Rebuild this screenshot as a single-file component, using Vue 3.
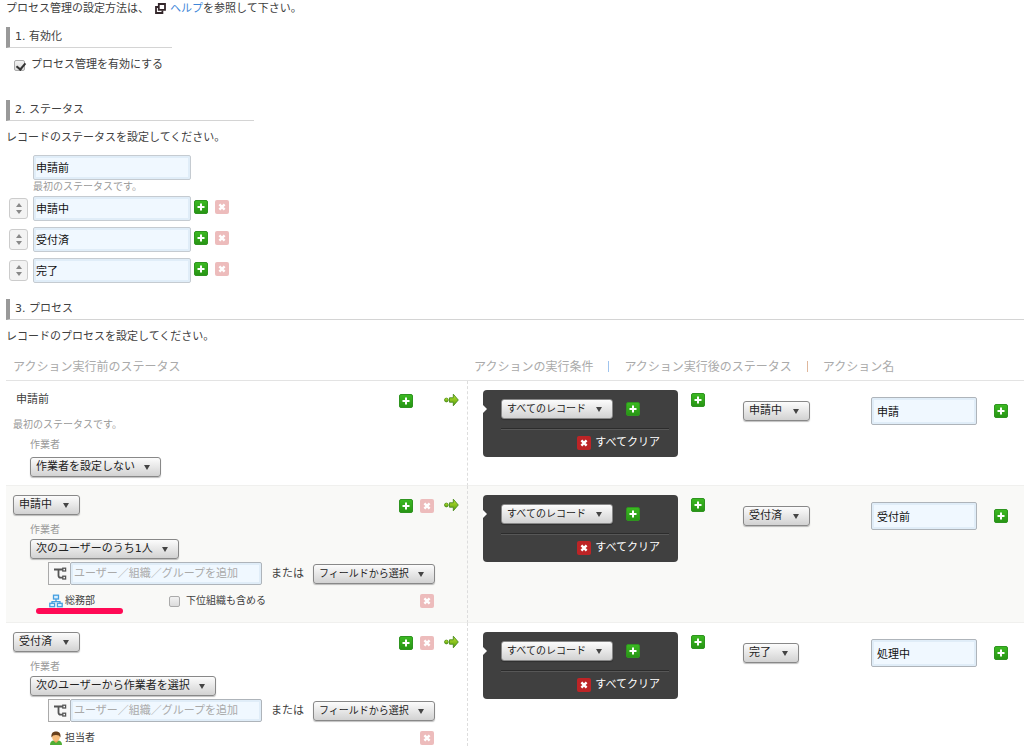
<template>
	<main class = "page">
		<svg class = "sprite" width = "0" height = "0" aria-hidden = "true">
			<linearGradient id = "green" x1 = "0" y1 = "0" x2 = "0" y2 = "1">
				<stop offset = "0" stop-color = "#3cba22" />
				<stop offset = "1" stop-color = "#279414" />
			</linearGradient>
			<linearGradient id = "lime" x1 = "0" y1 = "0" x2 = "0" y2 = "1">
				<stop offset = "0" stop-color = "#c0e830" />
				<stop offset = "1" stop-color = "#559d0c" />
			</linearGradient>
			<symbol id = "plus" viewBox = "0 0 14 14">
				<rect x = "0.5" y = "0.5" width = "13" height = "13" rx = "1.5" fill = "url(#green)" stroke = "#2f9420" />
				<path d = "M7 3.5v7M3.5 7h7" stroke = "#fff" stroke-width = "2" />
			</symbol>
			<symbol id = "cross" viewBox = "0 0 14 14">
				<rect width = "14" height = "14" rx = "2" fill = "currentColor" />
				<path d = "M4.4 4.4l5.2 5.2M9.6 4.4L4.4 9.6" stroke = "#fff" stroke-width = "2.4" />
			</symbol>
			<symbol id = "arrow" viewBox = "0 0 15 14">
				<circle cx = "2.4" cy = "7" r = "1.9" fill = "url(#lime)" stroke = "#4b8d1b" stroke-width = "0.8" />
				<path d = "M5.5 4.8h3.8V1.2L14.3 7l-5 5.8V9.2H5.5z" fill = "url(#lime)" stroke = "#478a1c" stroke-width = "0.9" stroke-linejoin = "round" />
			</symbol>
			<symbol id = "popup" viewBox = "0 0 11 11">
				<path d = "M3.8 1h6.2v5.8H3.8z" fill = "#fff" stroke = "#33262a" stroke-width = "1.8" />
				<path d = "M3 4H1v6h6.4V7.4" fill = "none" stroke = "#33262a" stroke-width = "1.8" />
			</symbol>
			<symbol id = "tree" viewBox = "0 0 14 14">
				<path d = "M1 2.5h9M5.5 2.5v6q0 2.2 2.2 2.2H10" fill = "none" stroke = "#555" stroke-width = "1.8" />
				<rect x = "9.8" y = "1.2" width = "2.8" height = "2.8" fill = "#fff" stroke = "#555" stroke-width = "1.3" />
				<rect x = "9.8" y = "9.2" width = "2.8" height = "2.8" fill = "#fff" stroke = "#555" stroke-width = "1.3" />
			</symbol>
			<symbol id = "org" viewBox = "0 0 14 14">
				<g fill = "#d9efff" stroke = "#459fe0" stroke-width = "1.3">
					<path d = "M7 5v3M3 9.5V7.6h8v1.9" fill = "none" />
					<rect x = "4.5" y = "1.2" width = "5" height = "3.8" />
					<rect x = "0.8" y = "9.3" width = "4.8" height = "3.4" />
					<rect x = "8.4" y = "9.3" width = "4.8" height = "3.4" />
				</g>
			</symbol>
			<symbol id = "user" viewBox = "0 0 14 14">
				<path d = "M1 14q0-4.2 4-4.4h4q4 .2 4 4.4z" fill = "#4fae35" />
				<path d = "M5 8.5h4v1.7L7 12l-2-1.8z" fill = "#e8a25c" />
				<ellipse cx = "7" cy = "5.8" rx = "3.9" ry = "4.2" fill = "#f8bd7c" />
				<path d = "M2.6 6.6C1.8 2.4 3.8.4 7 .4s5.2 2 4.4 6.2C10.6 4.8 9.5 4 7 4S3.4 4.8 2.6 6.6z" fill = "#68401d" />
			</symbol>
		</svg>

		<p class = "text">
			プロセス管理の設定方法は、<a class = "help" href = "#"><svg class = "popup"><use href = "#popup" /></svg>ヘルプ</a>を参照して下さい。
		</p>

		<h2 class = "heading first">1. 有効化</h2>
		<label class = "enable">
			<input v-model = "enabled" class = "check" type = "checkbox" />
			プロセス管理を有効にする
		</label>

		<h2 class = "heading second">2. ステータス</h2>
		<p class = "text lead">レコードのステータスを設定してください。</p>

		<ul class = "statuses">
			<li v-for = "(status, i) in statuses" :key = "i">
				<div class = "status">
					<button v-if = "i > 0" class = "sorter" type = "button" aria-label = "並べ替え"></button>
					<span v-else class = "sorter-space"></span>
					<input v-model = "status.name" class = "input status-name" type = "text" aria-label = "ステータス" />
					<template v-if = "i > 0">
						<button class = "icon" type = "button" aria-label = "追加"><svg><use href = "#plus" /></svg></button>
						<button class = "icon pale" type = "button" aria-label = "削除"><svg><use href = "#cross" /></svg></button>
					</template>
				</div>
				<p v-if = "i === 0" class = "note under">最初のステータスです。</p>
			</li>
		</ul>

		<h2 class = "heading third">3. プロセス</h2>
		<p class = "text lead">レコードのプロセスを設定してください。</p>

		<table class = "process">
			<colgroup>
				<col class = "col-before" />
				<col class = "col-condition" />
				<col class = "col-after" />
				<col />
			</colgroup>
			<thead>
				<tr>
					<th>アクション実行前のステータス</th>
					<th colspan = "3">
						<div class = "titles">
							<span>アクションの実行条件</span>
							<span class = "bar blue"></span>
							<span>アクション実行後のステータス</span>
							<span class = "bar tan"></span>
							<span>アクション名</span>
						</div>
					</th>
				</tr>
			</thead>
			<tbody>
				<tr v-for = "row in rows" :key = "row.before">
					<td class = "before">
						<div class = "head">
							<span v-if = "row.initial" class = "initial">{{ row.before }}</span>
							<span v-else class = "select wide">
								<select aria-label = "実行前のステータス"><option>{{ row.before }}</option></select>
							</span>
							<span class = "actions">
								<button class = "icon" type = "button" aria-label = "追加"><svg><use href = "#plus" /></svg></button>
								<button v-if = "!row.initial" class = "icon pale" type = "button" aria-label = "削除"><svg><use href = "#cross" /></svg></button>
								<span v-else class = "icon"></span>
								<svg class = "arrow"><use href = "#arrow" /></svg>
							</span>
						</div>
						<p v-if = "row.initial" class = "note">最初のステータスです。</p>
						<div class = "worker">
							<label class = "worker-label" :for = "'worker-' + row.icon">作業者</label>
							<span class = "select">
								<select :id = "'worker-' + row.icon"><option>{{ row.worker }}</option></select>
							</span>
							<div v-if = "row.member" class = "picker">
								<button class = "tree" type = "button" aria-label = "組織から選択"><svg><use href = "#tree" /></svg></button>
								<input class = "input member" type = "text" placeholder = "ユーザー／組織／グループを追加" aria-label = "ユーザー／組織／グループを追加" />
								<span class = "or">または</span>
								<span class = "select small">
									<select aria-label = "フィールド"><option>フィールドから選択</option></select>
								</span>
							</div>
							<div v-if = "row.member" class = "entry">
								<span class = "entity" :class = "{marked: row.marked}">
									<svg><use :href = "'#' + row.icon" /></svg>{{ row.member }}
								</span>
								<label v-if = "row.icon === 'org'" class = "children">
									<input v-model = "row.children" class = "check" type = "checkbox" />
									下位組織も含める
								</label>
								<button class = "icon pale" type = "button" aria-label = "削除"><svg><use href = "#cross" /></svg></button>
							</div>
						</div>
					</td>
					<td>
						<div class = "condition">
							<div class = "panel">
								<div class = "filter">
									<span class = "select small">
										<select aria-label = "実行条件"><option>すべてのレコード</option></select>
									</span>
									<button class = "icon" type = "button" aria-label = "追加"><svg><use href = "#plus" /></svg></button>
								</div>
								<button class = "clear" type = "button"><svg><use href = "#cross" /></svg>すべてクリア</button>
							</div>
							<button class = "icon" type = "button" aria-label = "条件を追加"><svg><use href = "#plus" /></svg></button>
						</div>
					</td>
					<td class = "after">
						<span class = "select wide">
							<select aria-label = "実行後のステータス"><option>{{ row.after }}</option></select>
						</span>
					</td>
					<td>
						<div class = "name">
							<input v-model = "row.action" class = "input action" type = "text" aria-label = "アクション名" />
							<button class = "icon" type = "button" aria-label = "追加"><svg><use href = "#plus" /></svg></button>
						</div>
					</td>
				</tr>
			</tbody>
		</table>
	</main>
</template>

<script setup>
import {ref} from "vue"

const enabled = ref(true)

const statuses = ref([
	{name: "申請前"},
	{name: "申請中"},
	{name: "受付済"},
	{name: "完了"}
])

const rows = ref([
	{
		before: "申請前",
		initial: true,
		worker: "作業者を設定しない",
		icon: "none",
		after: "申請中",
		action: "申請"
	},
	{
		before: "申請中",
		worker: "次のユーザーのうち1人",
		member: "総務部",
		icon: "org",
		marked: true,
		children: false,
		after: "受付済",
		action: "受付前"
	},
	{
		before: "受付済",
		worker: "次のユーザーから作業者を選択",
		member: "担当者",
		icon: "user",
		after: "完了",
		action: "処理中"
	}
])
</script>

<style>
body {
	margin: 0;
	background: #fff;
}
</style>

<style scoped>
.page {
	padding: 1px 0 0 6px;
	font: 11px/16px "DejaVu Sans", "Noto Sans CJK JP", sans-serif;
	color: #404040;
}

.page * {
	box-sizing: border-box;
}

.sprite {
	position: absolute;
}

button, input, select {
	margin: 0;
	font: inherit;
	color: inherit;
}

button {
	padding: 0;
	border: 0;
	background: none;
	cursor: pointer;
}

p, h2, ul {
	margin: 0;
	padding: 0;
}

ul {
	list-style: none;
}

.help {
	margin-left: 6px;
	color: #3f86d8;
	text-decoration: none;
}

.popup {
	width: 11px;
	height: 11px;
	margin-right: 4px;
	vertical-align: -2px;
}

.heading {
	height: 21px;
	padding-left: 5px;
	border-left: 4px solid #999;
	border-bottom: 1px solid #d4d4d4;
	font-size: 11px;
	font-weight: normal;
	line-height: 20px;
}

.first {
	width: 166px;
	margin-top: 10px;
}

.second {
	width: 248px;
	margin-top: 27px;
}

.third {
	margin-top: 16px;
}

.lead {
	margin-top: 9px;
}

.enable {
	display: flex;
	align-items: center;
	gap: 6px;
	margin-top: 9px;
	padding-left: 8px;
}

.check {
	position: relative;
	width: 11px;
	height: 11px;
	appearance: none;
	border: 1px solid #aaa;
	border-radius: 2px;
	background: linear-gradient(#f2f2f2, #dcdcdc);
}

.check:checked::after {
	content: "";
	position: absolute;
	left: 3px;
	top: 0;
	width: 4px;
	height: 7px;
	border: solid #333;
	border-width: 0 2px 2px 0;
	transform: rotate(40deg);
}

.statuses {
	display: flex;
	flex-direction: column;
	gap: 6px;
	margin-top: 9px;
}

.statuses li:first-child {
	margin-bottom: -4px;
}

.status {
	display: flex;
	align-items: center;
	gap: 7px;
	padding-left: 3px;
}

.status .icon {
	margin-bottom: 4px;
}

.sorter {
	display: flex;
	flex-direction: column;
	align-items: center;
	justify-content: center;
	gap: 3px;
	width: 19px;
	height: 21px;
	margin-right: -2px;
	border: 1px solid #ccc;
	border-radius: 3px;
	background: #f3f3f3;
}

.sorter::before, .sorter::after {
	content: "";
	border: 3px solid transparent;
}

.sorter::before {
	border-top-width: 0;
	border-bottom: 4px solid #888;
}

.sorter::after {
	border-bottom-width: 0;
	border-top: 4px solid #888;
}

.sorter-space {
	width: 17px;
}

.input {
	border: 1px solid #aeb4ba;
	border-radius: 2px;
	background: #f0f8ff;
	box-shadow: inset 0 0 0 2px #e0edf8;
	color: #111;
	outline: none;
}

.input::placeholder {
	color: #aaa;
	opacity: 1;
}

.status-name {
	width: 158px;
	height: 25px;
	margin-right: -4px;
	padding: 0 2px 2px;
	border-color: #c5cbd1;
}

.icon {
	flex: none;
	width: 14px;
	height: 14px;
}

.icon svg, .clear svg, .entity svg, .tree svg {
	display: block;
	flex: none;
	width: 14px;
	height: 14px;
}

.pale {
	color: #edbcbc;
}

.note {
	font-size: 10px;
	line-height: 14px;
	color: #999;
}

.under {
	padding-left: 27px;
}

.process {
	width: 100%;
	margin-top: 7px;
	table-layout: fixed;
	border-collapse: separate;
	border-spacing: 0;
}

.col-before {
	width: 462px;
}

.col-condition {
	width: 260px;
}

.col-after {
	width: 128px;
}

th {
	height: 29px;
	padding: 1px 0 0 7px;
	border-bottom: 1px solid #e3e3e3;
	font-size: 12px;
	font-weight: normal;
	text-align: left;
	color: #aaa;
	white-space: nowrap;
}

.titles {
	display: flex;
	align-items: center;
	gap: 15px;
	margin-left: -1px;
}

.bar {
	width: 1px;
	height: 11px;
}

.blue {
	background: #9fc4ee;
}

.tan {
	background: #dfb79c;
}

td {
	padding: 0 0 0 15px;
	border-bottom: 1px solid #f0f0ee;
	vertical-align: top;
}

tbody tr:nth-child(even) {
	background: #f9f9f7;
}

tbody tr:last-child td {
	padding-bottom: 0;
	border-bottom: 0;
}

td.before {
	height: 105px;
	padding: 7px 8px 13px 7px;
	border-right: 1px dashed #ddd;
}

tbody tr:first-child td.before {
	padding-bottom: 0;
}

.head {
	display: flex;
	align-items: center;
	justify-content: space-between;
	height: 24px;
}

.initial {
	padding-left: 3px;
}

.actions {
	display: flex;
	align-items: center;
	gap: 7px;
	padding-top: 2px;
}

.arrow {
	width: 15px;
	height: 14px;
	margin-left: 3px;
	margin-bottom: 2px;
}

.before .note {
	margin-top: 6px;
}

.before .note + .worker {
	margin-top: 6px;
}

.worker {
	display: flex;
	flex-direction: column;
	align-items: flex-start;
	margin-top: 6px;
	padding-left: 17px;
}

.worker-label {
	margin-bottom: 2px;
	font-size: 10px;
	line-height: 14px;
	color: #999;
}

.note + .worker .worker-label {
	margin-bottom: 5px;
}

.select {
	position: relative;
	display: inline-flex;
}

.select select {
	height: 20px;
	padding: 0 25px 0 5px;
	appearance: none;
	border: 1px solid #888;
	border-radius: 3px;
	background: linear-gradient(#fcfcfc, #d2d2d2);
	box-shadow: 0 1px 1px rgba(0, 0, 0, 0.25);
	line-height: 18px;
	color: #222;
	outline: none;
}

.select::after {
	content: "";
	position: absolute;
	right: 11px;
	top: 8px;
	border: 3px solid transparent;
	border-top: 5px solid #444;
	border-bottom-width: 0;
	pointer-events: none;
}

.small select {
	font-size: 10px;
}

.wide select {
	padding-right: 27px;
}

.picker {
	display: flex;
	align-items: center;
	margin-top: 3px;
	padding-left: 18px;
}

.tree {
	display: grid;
	place-items: center;
	width: 22px;
	height: 23px;
	border: 1px solid #aaa;
	border-right: 0;
	background: #f8f8f8;
}

.member {
	width: 192px;
	height: 23px;
	padding: 0 3px;
}

.or {
	padding: 0 9px;
}

.entry {
	display: flex;
	align-items: center;
	align-self: stretch;
	height: 16px;
	margin-top: 8px;
	padding: 0 25px 0 19px;
	font-size: 10px;
}

.entry .icon {
	margin-left: auto;
}

.entity {
	position: relative;
	display: flex;
	align-items: center;
	gap: 2px;
	width: 120px;
}

.marked::after {
	content: "";
	position: absolute;
	left: -13px;
	top: 15px;
	width: 87px;
	height: 6px;
	border-radius: 3px;
	background: #ff0a55;
}

.children {
	display: flex;
	align-items: center;
	gap: 6px;
}

.condition {
	display: flex;
	gap: 13px;
	padding-top: 9px;
}

.condition > .icon {
	margin-top: 3px;
}

.panel {
	position: relative;
	width: 195px;
	height: 67px;
	padding: 9px 9px 0 18px;
	border-radius: 4px;
	background: #404040;
}

.panel::before {
	content: "";
	position: absolute;
	left: 0;
	top: 15px;
	border: 4px solid transparent;
	border-left-color: #fff;
	border-right-width: 0;
}

.filter {
	display: flex;
	align-items: center;
	gap: 13px;
	padding-bottom: 9px;
	border-bottom: 1px solid #2c2c2c;
	box-shadow: 0 1px #575757;
}

.clear {
	display: flex;
	align-items: center;
	gap: 4px;
	margin: 6px 9px 0 auto;
	color: #fff;
}

.clear svg {
	color: #bd2426;
}

td.after {
	padding-top: 20px;
}

.name {
	display: flex;
	align-items: center;
	gap: 17px;
	padding-top: 16px;
}

.action {
	width: 106px;
	height: 28px;
	padding: 0 5px;
}
</style>
